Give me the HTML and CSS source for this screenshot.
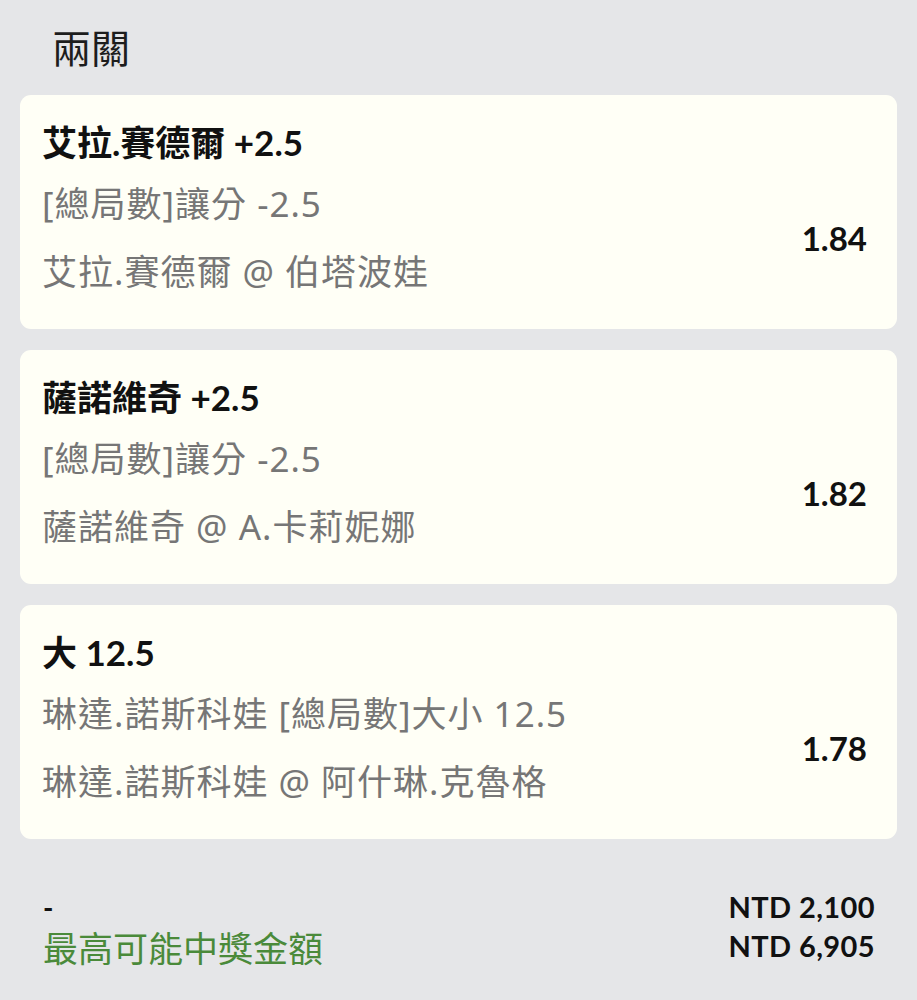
FILE: index.html
```html
<!DOCTYPE html>
<html lang="zh-Hant">
<head>
<meta charset="utf-8">
<title>兩關</title>
<link rel="stylesheet" href="styles.css">
</head>
<body>
<div class="page">
  <div class="header">兩關</div>
  <div class="cards">
    <div class="card">
      <div class="title">艾拉.賽德爾 +2.5</div>
      <div class="body">
        <div class="lines">
          <div class="line">[總局數]讓分 -2.5</div>
          <div class="line">艾拉.賽德爾 @ 伯塔波娃</div>
        </div>
        <div class="odds">1.84</div>
      </div>
    </div>
    <div class="card">
      <div class="title">薩諾維奇 +2.5</div>
      <div class="body">
        <div class="lines">
          <div class="line">[總局數]讓分 -2.5</div>
          <div class="line">薩諾維奇 @ A.卡莉妮娜</div>
        </div>
        <div class="odds">1.82</div>
      </div>
    </div>
    <div class="card">
      <div class="title">大 12.5</div>
      <div class="body">
        <div class="lines">
          <div class="line">琳達.諾斯科娃 [總局數]大小 12.5</div>
          <div class="line">琳達.諾斯科娃 @ 阿什琳.克魯格</div>
        </div>
        <div class="odds">1.78</div>
      </div>
    </div>
  </div>
  <div class="footer">
    <div class="foot-left">
      <div class="dash">-</div>
      <div class="win-label">最高可能中獎金額</div>
    </div>
    <div class="foot-right">
      <div class="amount">NTD 2,100</div>
      <div class="amount">NTD 6,905</div>
    </div>
  </div>
</div>
</body>
</html>
```

FILE: styles.css
```css
html, body {
  margin: 0;
  padding: 0;
  background: #e5e6e8;
}

.page {
  width: 917px;
  height: 1000px;
  box-sizing: border-box;
  padding: 0 20px;
  font-family: "Noto Sans", "Noto Sans CJK TC", sans-serif;
  color: #111;
}

.header {
  height: 95px;
  box-sizing: border-box;
  padding: 21px 0 0 32px;
  font-family: "Noto Sans CJK TC", sans-serif;
  font-size: 39px;
  line-height: 50px;
  color: #1d1d1d;
}

.cards {
  display: flex;
  flex-direction: column;
  gap: 21px;
}

.card {
  background: #fffff6;
  border-radius: 11px;
  height: 234px;
  box-sizing: border-box;
  padding: 24px 30px 0 22px;
  display: flex;
  flex-direction: column;
}

.title {
  font-family: "Lato", "Noto Sans CJK TC", sans-serif;
  font-weight: 700;
  font-size: 35px;
  line-height: 46px;
  color: #111;
}

.body {
  display: flex;
  align-items: center;
  justify-content: space-between;
  margin-top: 16px;
}

.lines {
  display: flex;
  flex-direction: column;
  gap: 22px;
}

.line {
  font-family: "Noto Sans", "Noto Sans CJK TC", sans-serif;
  font-size: 35px;
  line-height: 46px;
  letter-spacing: 1px;
  color: #767676;
}

.odds {
  font-family: "Lato", sans-serif;
  font-weight: 700;
  font-size: 33px;
  line-height: 46px;
  color: #111;
}

.footer {
  display: flex;
  justify-content: space-between;
  align-items: flex-start;
  padding: 48px 42px 0 23px;
  margin-right: -20px;
}

.foot-left, .foot-right {
  display: flex;
  flex-direction: column;
}

.foot-right {
  align-items: flex-end;
}

.dash {
  font-family: "Lato", sans-serif;
  font-weight: 700;
  font-size: 28px;
  line-height: 40px;
  color: #111;
}

.win-label {
  font-family: "Noto Sans CJK TC", sans-serif;
  font-size: 35px;
  line-height: 40px;
  color: #4a8a3a;
}

.amount {
  font-family: "Lato", sans-serif;
  font-weight: 700;
  font-size: 29px;
  line-height: 39px;
  letter-spacing: 0.4px;
  color: #111;
}
```
